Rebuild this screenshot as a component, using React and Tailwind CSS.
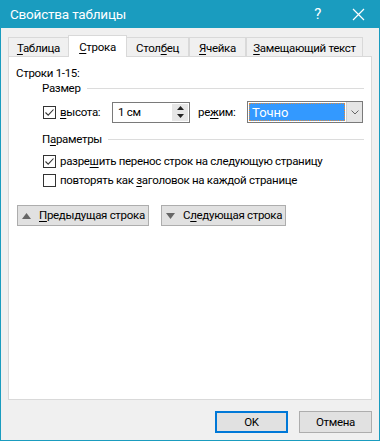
const font = { fontFamily: 'Roboto, "Liberation Sans", sans-serif' };

function U({ children }) {
  return <span className="underline underline-offset-2">{children}</span>;
}

function Check({ checked }) {
  return (
    <span className="flex h-[13px] w-[13px] shrink-0 items-center justify-center border border-[#333] bg-white">
      {checked && (
        <svg width="11" height="11" viewBox="0 0 11 11">
          <path d="M1.5 5.5 L4.2 8.2 L9.5 2.5" fill="none" stroke="#333" strokeWidth="1.1" />
        </svg>
      )}
    </span>
  );
}

function Tab({ active, w, children }) {
  if (active)
    return (
      <div
        className={`relative z-10 -mb-px flex h-[22px] items-center justify-center whitespace-nowrap border border-b-0 border-[#d9d9d9] bg-white pt-[1px] ${w}`}
      >
        {children}
      </div>
    );
  return (
    <div
      className={`flex h-[19px] items-center justify-center whitespace-nowrap border border-b-0 border-[#d9d9d9] bg-[#f0f0f0] pt-[3px] first:border-r-0 [&:nth-child(3)]:border-l-0 ${w}`}
    >
      {children}
    </div>
  );
}

function Group({ title, children }) {
  return (
    <div className="flex flex-col">
      <div className="flex items-center gap-[6px] pl-[26px]">
        <span>{title}</span>
        <div className="h-px flex-1 bg-[#dcdcdc]" />
      </div>
      {children}
    </div>
  );
}

function Btn({ up, children, className }) {
  return (
    <button
      type="button"
      className={`flex h-[21px] shrink-0 items-center gap-[8px] whitespace-nowrap border border-[#adadad] bg-[#e1e1e1] pl-[4px] text-black ${className}`}
    >
      <svg width="9" height="6" viewBox="0 0 9 6" className="shrink-0">
        {up ? <path d="M0 6 L4.5 0 L9 6 Z" fill="#666" /> : <path d="M0 0 L9 0 L4.5 6 Z" fill="#666" />}
      </svg>
      {children}
    </button>
  );
}

export default function App() {
  return (
    <div
      className="flex h-[441px] w-[380px] flex-col overflow-hidden border border-t-0 border-[#1a9cbf] bg-[#f0f0f0] text-[11.5px] leading-[15px] tracking-[-0.3px] text-black"
      style={font}
    >
      <div className="-mx-px flex h-[28px] shrink-0 items-center bg-[#1a9cbf] pl-[10px] text-white">
        <span className="text-[13.5px] tracking-[-0.2px]">Свойства таблицы</span>
        <span className="ml-auto mr-[31px] text-[15px]">?</span>
        <svg width="13" height="13" viewBox="0 0 13 13" className="mr-[15px]">
          <path d="M1 1 L12 12 M12 1 L1 12" stroke="white" strokeWidth="1.2" />
        </svg>
      </div>

      <div className="flex items-end pl-[7px] pt-[7px]">
        <Tab w="w-[60px]">
          <span>
            <U>Т</U>аблица
          </span>
        </Tab>
        <Tab active w="w-[59px]">
          <span>
            <U>С</U>трока
          </span>
        </Tab>
        <Tab w="w-[62px]">
          <span>
            Стол<U>б</U>ец
          </span>
        </Tab>
        <Tab w="w-[57px]">
          <span>
            <U>Я</U>чейка
          </span>
        </Tab>
        <Tab w="w-[117px]">
          <span>
            <U>З</U>амещающий текст
          </span>
        </Tab>
      </div>

      <div className="mx-[7px] flex h-[344px] flex-col border border-[#d9d9d9] bg-white px-[7px] pt-[9px]">
        <div>Строки 1-15:</div>

        <Group title="Размер">
          <div className="mt-[5px] flex items-center whitespace-nowrap pl-[27px]">
            <Check checked />
            <span className="ml-[4px] w-[52px]">
              <U>в</U>ысота:
            </span>
            <div className="flex h-[21px] w-[78px] shrink-0 items-stretch border border-[#7a7a7a] bg-white">
              <span className="flex flex-1 items-center pl-[5px]">1 см</span>
              <div className="my-px mr-px flex w-[16px] flex-col justify-between bg-[#e6e6e6]">
                <div className="flex h-[9px] items-center justify-center">
                  <svg width="7" height="4" viewBox="0 0 7 4">
                    <path d="M0 4 L3.5 0 L7 4 Z" fill="#222" />
                  </svg>
                </div>
                <div className="flex h-[9px] items-center justify-center">
                  <svg width="7" height="4" viewBox="0 0 7 4">
                    <path d="M0 0 L7 0 L3.5 4 Z" fill="#222" />
                  </svg>
                </div>
              </div>
            </div>
            <span className="ml-[8px] w-[49px]">
              ре<U>ж</U>им:
            </span>
            <div className="flex h-[22px] w-[116px] shrink-0 border border-[#7a7a7a] bg-white">
              <div className="m-px flex flex-1 items-center border border-dotted border-[#e08a3c] bg-[#3399ff] pl-[2px] text-[13px] tracking-normal text-white">
                Точно
              </div>
              <div className="flex w-[16px] items-center justify-center border-l border-[#cfcfcf] bg-[#e5e5e5]">
                <svg width="8" height="5" viewBox="0 0 8 5">
                  <path d="M0.5 0.5 L4 4 L7.5 0.5" fill="none" stroke="#666" strokeWidth="1" />
                </svg>
              </div>
            </div>
          </div>
        </Group>

        <div className="mt-[9px]">
          <Group
            title={
              <>
                П<U>а</U>раметры
              </>
            }
          >
            <div className="mt-[6px] flex flex-col gap-[3px] whitespace-nowrap pl-[27px]">
              <div className="flex h-[16px] items-center gap-[4px]">
                <Check checked />
                <span>
                  разре<U>ш</U>ить перенос строк на следующую страницу
                </span>
              </div>
              <div className="flex h-[16px] items-center gap-[4px]">
                <Check />
                <span>
                  повторять как <U>з</U>аголовок на каждой странице
                </span>
              </div>
            </div>
          </Group>
        </div>

        <div className="mt-[17px] flex gap-[12px] pl-px">
          <Btn up className="w-[132px]">
            <span>
              <U>П</U>редыдущая строка
            </span>
          </Btn>
          <Btn className="w-[125px]">
            <span>
              С<U>л</U>едующая строка
            </span>
          </Btn>
        </div>
      </div>

      <div className="mt-[11px] flex justify-end gap-[11px] pr-[7px]">
        <button
          type="button"
          className="flex h-[22px] w-[73px] items-center justify-center border-2 border-[#0078d7] bg-[#e1e1e1]"
        >
          OK
        </button>
        <button
          type="button"
          className="flex h-[22px] w-[73px] items-center justify-center border border-[#adadad] bg-[#e1e1e1]"
        >
          Отмена
        </button>
      </div>
    </div>
  );
}
